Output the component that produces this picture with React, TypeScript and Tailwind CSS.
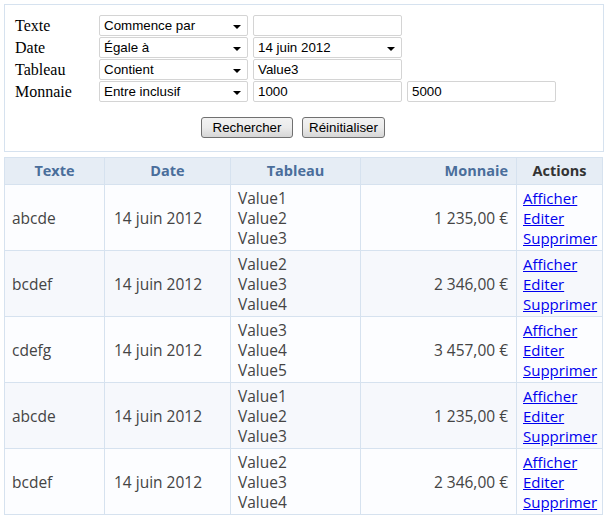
type Row = {
    texte: string
    date: string
    tableau: string[]
    monnaie: string
}

const rows: Row[] = [
    { texte: "abcde", date: "14 juin 2012", tableau: ["Value1", "Value2", "Value3"], monnaie: "1 235,00 €" },
    { texte: "bcdef", date: "14 juin 2012", tableau: ["Value2", "Value3", "Value4"], monnaie: "2 346,00 €" },
    { texte: "cdefg", date: "14 juin 2012", tableau: ["Value3", "Value4", "Value5"], monnaie: "3 457,00 €" },
    { texte: "abcde", date: "14 juin 2012", tableau: ["Value1", "Value2", "Value3"], monnaie: "1 235,00 €" },
    { texte: "bcdef", date: "14 juin 2012", tableau: ["Value2", "Value3", "Value4"], monnaie: "2 346,00 €" },
]

function Select({ value }: { value: string }) {
    return (
        <div className="relative w-[149px] h-[21px] border border-[#d4d4d4] rounded-[2px] bg-white flex items-center pl-[4px] text-[13.33px] text-black">
            {value}
            {/* dropdown arrow */}
            <span className="absolute right-[6px] top-[9px] w-0 h-0 border-l-[4px] border-r-[4px] border-t-[4px] border-l-transparent border-r-transparent border-t-black" />
        </div>
    )
}

function Field({ value }: { value?: string }) {
    return (
        <div className="w-[149px] h-[21px] border border-[#d4d4d4] rounded-[2px] bg-white flex items-center pl-[4px] text-[13.33px] text-black">
            {value}
        </div>
    )
}

function Button({ label, w }: { label: string; w: string }) {
    return (
        <button className={`${w} h-[21px] border border-[#707070] rounded-[3px] bg-gradient-to-b from-[#f2f2f2] via-[#ebebeb] to-[#d6d6d6] text-[13.33px] text-black flex items-center justify-center`}>
            {label}
        </button>
    )
}

export default function App() {
    const filters = [
        { label: "Texte", op: "Commence par", extra: <Field /> },
        { label: "Date", op: "Égale à", extra: <Select value="14 juin 2012" /> },
        { label: "Tableau", op: "Contient", extra: <Field value="Value3" /> },
        { label: "Monnaie", op: "Entre inclusif", extra: <><Field value="1000" /><Field value="5000" /></> },
    ]

    const cell = "border border-[#d6e2ef] pt-[3px] pb-[2px] leading-[20px] align-middle"

    return (
        <div className="w-[600px] ml-[4px] mt-[4px] bg-white" style={{ fontFamily: '"Liberation Sans", Arial, sans-serif' }}>
            {/* Filter panel */}
            <div className="border border-[#d6e2ef] pl-[10px] pt-[10px] pb-[13px]">
                <div className="flex flex-col gap-[1px]">
                    {filters.map((f) => (
                        <div key={f.label} className="flex items-center h-[21px]">
                            <div className="w-[84px] text-[16px] text-black" style={{ fontFamily: '"Liberation Serif", "Times New Roman", serif' }}>
                                {f.label}
                            </div>
                            <div className="flex gap-[5px]">
                                <Select value={f.op} />
                                {f.extra}
                            </div>
                        </div>
                    ))}
                </div>
                <div className="flex gap-[9px] mt-[15px] ml-[186px]">
                    <Button label="Rechercher" w="w-[92px]" />
                    <Button label="Réinitialiser" w="w-[83px]" />
                </div>
            </div>

            {/* Results table */}
            <table
                className="w-[599px] table-fixed mt-[5px] border-collapse border border-[#d6e2ef] text-[15.5px] text-[#444]"
                style={{ fontFamily: '"Trebuchet MS", "Open Sans", sans-serif' }}
            >
                <colgroup>
                    <col className="w-[100px]" />
                    <col className="w-[126px]" />
                    <col className="w-[130px]" />
                    <col className="w-[156px]" />
                    <col />
                </colgroup>
                <thead>
                    <tr className="bg-[#e6edf5] h-[27px] font-bold text-[14.5px]">
                        <th className="border border-[#d6e2ef] text-center text-[#4a6e9b]">Texte</th>
                        <th className="border border-[#d6e2ef] text-center text-[#4a6e9b]">Date</th>
                        <th className="border border-[#d6e2ef] text-center text-[#4a6e9b]">Tableau</th>
                        <th className="border border-[#d6e2ef] text-right px-[8px] text-[#4a6e9b]">Monnaie</th>
                        <th className="border border-[#d6e2ef] text-center text-[#333]">Actions</th>
                    </tr>
                </thead>
                <tbody>
                    {rows.map((r, i) => (
                        <tr key={i} className={i % 2 === 0 ? "bg-[#fcfdff]" : "bg-[#f6f8fc]"}>
                            <td className={`${cell} px-[7px]`}>{r.texte}</td>
                            <td className={`${cell} px-[9px]`}>{r.date}</td>
                            <td className={`${cell} px-[7px]`}>
                                {r.tableau.map((v) => (
                                    <div key={v}>{v}</div>
                                ))}
                            </td>
                            <td className={`${cell} px-[8px] text-right`}>{r.monnaie}</td>
                            <td className={`${cell} px-[6px]`}>
                                <div className="flex flex-col text-[15px]">
                                    <a href="#" className="text-[#0000ee] underline">Afficher</a>
                                    <a href="#" className="text-[#0000ee] underline">Editer</a>
                                    <a href="#" className="text-[#0000ee] underline">Supprimer</a>
                                </div>
                            </td>
                        </tr>
                    ))}
                </tbody>
            </table>
        </div>
    )
}
